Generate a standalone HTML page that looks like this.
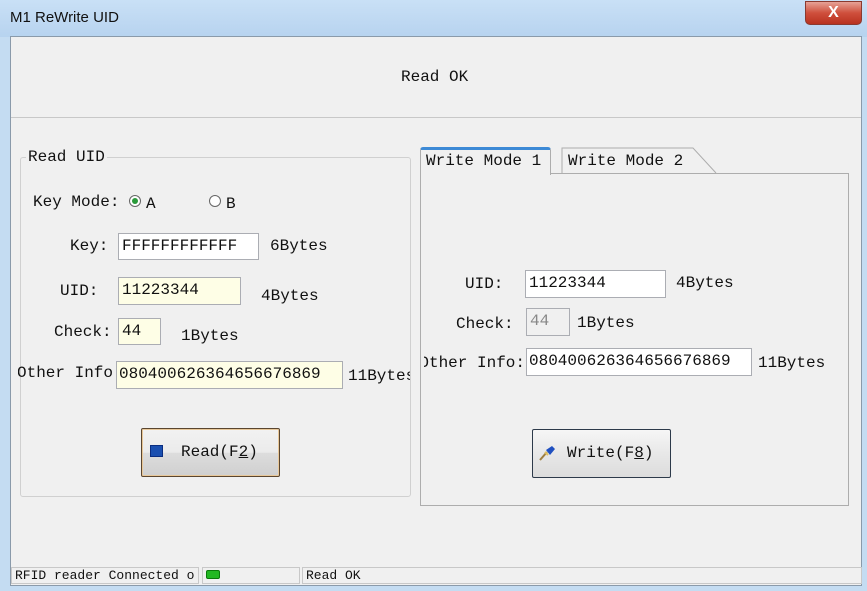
<!DOCTYPE html>
<html><head><meta charset="utf-8"><style>
*{margin:0;padding:0;box-sizing:border-box}
body{width:867px;height:591px;overflow:hidden;background:#c4dcf2;position:relative;font-family:"Liberation Mono",monospace;font-size:16px;color:#111}
.a{position:absolute;white-space:nowrap}
.tb{position:absolute;left:0;top:0;width:867px;height:37px;background:linear-gradient(#c9e0f6,#b7d3ef)}
.in{position:absolute;background:#fff;border:1px solid #abadb3;padding-left:3px;line-height:24px;overflow:hidden}
.y{background:#fefee6}
.btn{position:absolute;border:1px solid #707070;border-radius:2px;background:linear-gradient(#f2f2f2 0%,#ebebeb 50%,#dddddd 51%,#cfcfcf 100%)}
.sb{position:absolute;top:567px;height:17px;border:1px solid #c8c8c8;background:#f0f0f0;font-size:13px;line-height:15px;padding-left:3px}
.clip{position:absolute;overflow:hidden;height:22px}
.clip span{position:absolute;right:0;top:0;white-space:nowrap}
</style></head><body>
<div class="tb"></div>
<div class="a" style="left:10px;top:9px;font-family:'Liberation Sans',sans-serif;font-size:15px">M1 ReWrite UID</div>
<div class="a" style="left:805px;top:1px;width:57px;height:24px;border:1px solid #8a3a30;border-radius:0 0 5px 5px;background:linear-gradient(#e6a296,#cf4f3c 50%,#b8321f);color:#fff;text-align:center;font:bold 16px 'Liberation Sans',sans-serif;line-height:22px">X</div>
<div class="a" style="left:10px;top:36px;width:852px;height:550px;background:#f0f0f0;border:1px solid #8a9aaa"></div>
<div class="a" style="left:11px;top:117px;width:850px;height:1px;background:#c8c8c8"></div>
<div class="a" style="left:401px;top:68px">Read OK</div>

<div class="a" style="left:20px;top:157px;width:391px;height:340px;border:1px solid #d0d0d0;border-radius:3px"></div>
<div class="a" style="left:26px;top:148px;background:#f0f0f0;padding:0 2px">Read UID</div>
<div class="a" style="left:33px;top:193px">Key Mode:</div>
<div class="a" style="left:129px;top:195px;width:12px;height:12px;border:1px solid #666;border-radius:50%;background:#fff"><div style="margin:2px;width:6px;height:6px;border-radius:50%;background:#2a9a3a"></div></div>
<div class="a" style="left:146px;top:195px">A</div>
<div class="a" style="left:209px;top:195px;width:12px;height:12px;border:1px solid #666;border-radius:50%;background:#fff"></div>
<div class="a" style="left:226px;top:195px">B</div>
<div class="a" style="left:70px;top:237px">Key:</div>
<div class="in" style="left:118px;top:233px;width:141px;height:27px">FFFFFFFFFFFF</div>
<div class="a" style="left:270px;top:237px">6Bytes</div>
<div class="a" style="left:60px;top:282px">UID:</div>
<div class="in y" style="left:118px;top:277px;width:123px;height:28px">11223344</div>
<div class="a" style="left:261px;top:287px">4Bytes</div>
<div class="a" style="left:54px;top:323px">Check:</div>
<div class="in y" style="left:118px;top:318px;width:43px;height:27px">44</div>
<div class="a" style="left:181px;top:327px">1Bytes</div>
<div class="clip" style="left:18px;top:364px;width:95px"><span>Other Info</span></div>
<div class="in y" style="left:116px;top:361px;width:227px;height:28px;padding-left:2px">080400626364656676869</div>
<div class="a" style="left:348px;top:367px;width:62px;overflow:hidden">11Bytes</div>
<div class="btn" style="left:141px;top:428px;width:139px;height:49px;border-color:#5a4630;box-shadow:inset 0 0 0 1px #e8c89a"></div>
<div class="a" style="left:150px;top:445px;width:13px;height:12px;background:#1a4fb0;border:1px solid #0a2d80"></div>
<div class="a" style="left:181px;top:443px">Read(F<u>2</u>)</div>

<svg class="a" style="left:548px;top:140px" width="180" height="40"><path d="M14 34 L14 8 L145 8 L168 33" stroke="#adadad" fill="#f0f0f0"/></svg>
<div class="a" style="left:420px;top:173px;width:429px;height:333px;border:1px solid #adadad;background:#f0f0f0"></div>
<div class="a" style="left:420px;top:147px;width:131px;height:28px;background:#f0f0f0;border:1px solid #adadad;border-bottom:none;border-top:3px solid #3d8ad6;border-radius:3px 3px 0 0"></div>
<div class="a" style="left:426px;top:152px">Write Mode 1</div>
<div class="a" style="left:568px;top:152px">Write Mode 2</div>
<div class="a" style="left:465px;top:275px">UID:</div>
<div class="in" style="left:525px;top:270px;width:141px;height:28px">11223344</div>
<div class="a" style="left:676px;top:274px">4Bytes</div>
<div class="a" style="left:456px;top:315px">Check:</div>
<div class="in" style="left:526px;top:308px;width:44px;height:28px;background:#f0f0f0;color:#888">44</div>
<div class="a" style="left:577px;top:314px">1Bytes</div>
<div class="clip" style="left:424px;top:354px;width:101px"><span>Other Info:</span></div>
<div class="in" style="left:526px;top:348px;width:226px;height:28px;padding-left:2px">080400626364656676869</div>
<div class="a" style="left:758px;top:354px">11Bytes</div>
<div class="btn" style="left:532px;top:429px;width:139px;height:49px;border-color:#2d3a4a;background:linear-gradient(#f6f6f6,#e8e8e8 50%,#dcdcdc)"></div>
<svg class="a" style="left:538px;top:444px" width="20" height="18"><path d="M2 16 L9 8" stroke="#a08040" stroke-width="2"/><path d="M8 6 L14 2 L17 5 L12 11 Z" fill="#2050c0"/><path d="M7 8 L10 11" stroke="#e0c060" stroke-width="2"/></svg>
<div class="a" style="left:567px;top:444px">Write(F<u>8</u>)</div>

<div class="sb" style="left:11px;width:188px;overflow:hidden">RFID reader Connected o</div>
<div class="sb" style="left:202px;width:98px"><div style="margin-top:2px;width:14px;height:9px;border-radius:2px;background:#22b822;border:1px solid #0a7a0a"></div></div>
<div class="sb" style="left:302px;width:560px">Read OK</div>
</body></html>
